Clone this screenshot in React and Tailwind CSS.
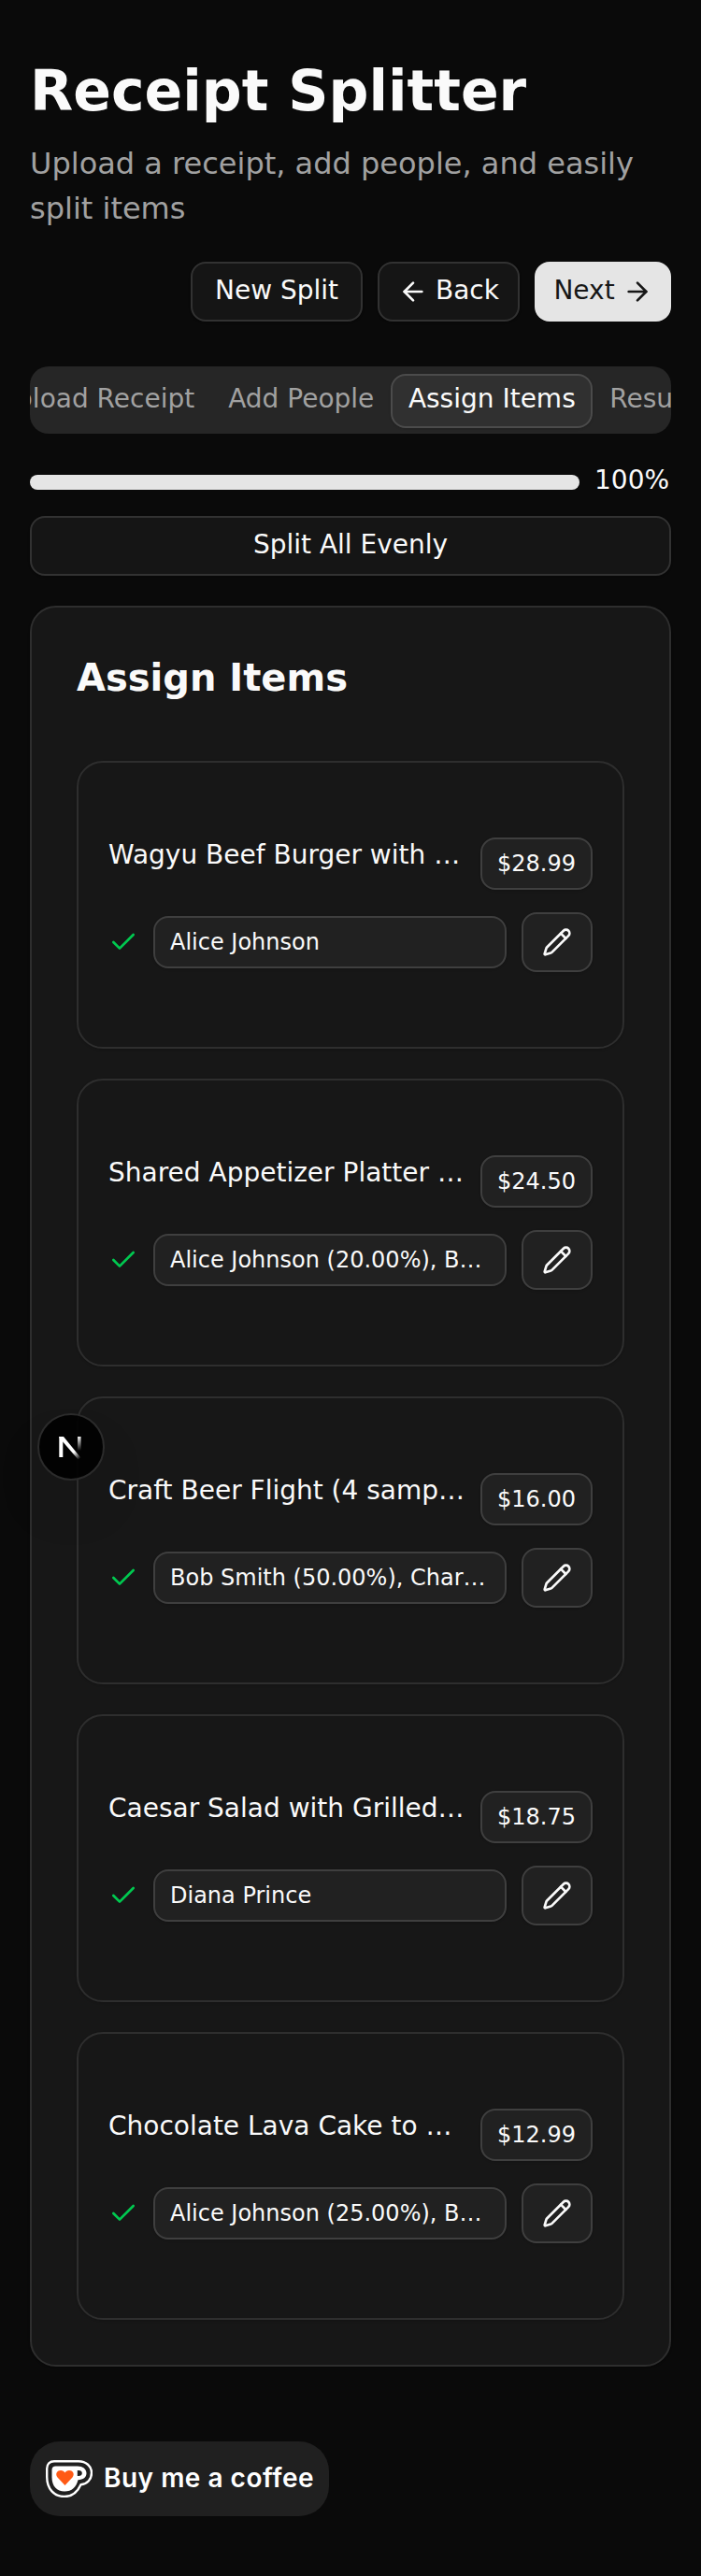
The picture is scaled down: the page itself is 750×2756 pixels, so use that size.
import { ArrowLeft, ArrowRight, Check, Pencil } from "lucide-react";

const items = [
  { name: "Wagyu Beef Burger with …", price: "$28.99", people: "Alice Johnson" },
  { name: "Shared Appetizer Platter …", price: "$24.50", people: "Alice Johnson (20.00%), B…" },
  { name: "Craft Beer Flight (4 samp…", price: "$16.00", people: "Bob Smith (50.00%), Char…" },
  { name: "Caesar Salad with Grilled…", price: "$18.75", people: "Diana Prince" },
  { name: "Chocolate Lava Cake to …", price: "$12.99", people: "Alice Johnson (25.00%), B…" },
];

const tabs = ["Upload Receipt", "Add People", "Assign Items", "Results"];

function OutlineButton({ children, className }) {
  return (
    <button className={`flex h-16 items-center justify-center rounded-[16px] border-2 border-[#323232] bg-[#151515] text-[28px] leading-10 shadow-sm ${className}`}>
      {children}
    </button>
  );
}

function ItemCard({ item }) {
  return (
    <div className="flex h-[308px] flex-col rounded-[28px] border-2 border-[#2e2e2e] bg-[#171717] px-8 pt-20 shadow-sm">
      <div className="flex items-start gap-4">
        <p className="min-w-0 flex-1 text-[28px] leading-[38px] whitespace-nowrap">{item.name}</p>
        <span className="flex h-14 shrink-0 items-center rounded-[16px] border-2 border-[#3f3f3f] bg-[#212121] px-4 text-2xl shadow-sm">
          {item.price}
        </span>
      </div>
      <div className="mt-6 flex items-center gap-4">
        <Check className="size-8 shrink-0 text-[#00c950]" />
        <div className="h-14 min-w-0 flex-1 rounded-[16px] border-2 border-[#3f3f3f] bg-[#212121] px-4 shadow-sm">
          <p className="text-2xl leading-[52px] whitespace-nowrap">{item.people}</p>
        </div>
        <button className="flex h-16 w-[76px] shrink-0 items-center justify-center rounded-[16px] border-2 border-[#3f3f3f] bg-[#212121] shadow-sm">
          <Pencil className="size-8" />
        </button>
      </div>
    </div>
  );
}

function DevBadge() {
  return (
    <div className="absolute top-[1512px] left-10 flex size-[72px] items-center justify-center rounded-full border-2 border-[#2b2b2b] bg-black/90 shadow-[0_32px_64px_-16px_rgba(0,0,0,0.24)]">
      <svg width="40" height="40" viewBox="0 0 40 40" fill="none">
        <defs>
          <linearGradient id="diag" x1="17" y1="18" x2="29" y2="33" gradientUnits="userSpaceOnUse">
            <stop offset="0.5" stopColor="#fff" />
            <stop offset="1" stopColor="#fff" stopOpacity="0" />
          </linearGradient>
          <linearGradient id="stem" x1="0" y1="8" x2="0" y2="24" gradientUnits="userSpaceOnUse">
            <stop stopColor="#fff" />
            <stop offset="1" stopColor="#fff" stopOpacity="0" />
          </linearGradient>
        </defs>
        <path d="M9.3 31V9" stroke="#fff" strokeWidth="4" />
        <path d="M7.3 9H12L32.5 34.2L30 36.2L7.3 10Z" fill="url(#diag)" />
        <path d="M28.8 9V25" stroke="url(#stem)" strokeWidth="3.6" />
      </svg>
    </div>
  );
}

function CoffeeCup() {
  return (
    <svg className="shrink-0" width="50" height="40" viewBox="0 0 50 40" fill="none">
      <path d="M9 1.2H35C43 1.2 49 6.5 49 13.5C49 20.5 44.5 25.5 37.5 26.3C34 34 28.5 39 20 39C9 39 1.2 31 1.2 18V9C1.2 4.2 4.2 1.2 9 1.2Z" fill="#202020" stroke="#fff" strokeWidth="2.4" />
      <path d="M10.5 6.5H34C39.500 6.5 43.5 9.5 43.5 14C43.5 18.5 40 21 34.5 21.2C32.5 29 28 33.5 20 33.5C12 33.5 6.5 28 6.5 18.5V10.5C6.5 8 8 6.5 10.5 6.5Z" fill="#fff" />
      <path d="M33.8 11H35C37.5 11 38.8 12 38.8 14C38.8 16 37.5 17 35 17H33.8Z" fill="#202020" />
      <path d="M20.5 27L12.5 18.5C9.5 14.5 12.5 11 16 11C18 11 19.6 12 20.5 13.5C21.4 12 23 11 25 11C28.5 11 31.5 14.5 28.5 18.5Z" fill="#ff5a16" />
    </svg>
  );
}

export default function App() {
  return (
    <div className="relative flex h-[2756px] w-[750px] flex-col overflow-hidden bg-[#0a0a0a] px-8 pt-[61px] font-['DejaVu_Sans',sans-serif] text-[#fafafa]">
      <h1 className="text-[60px] leading-[72px] font-bold">Receipt Splitter</h1>
      <p className="mt-[18px] text-[32px] leading-[48px] text-[#a1a1a1]">Upload a receipt, add people, and easily split items</p>

      <div className="mt-[33px] flex shrink-0 justify-end gap-4">
        <OutlineButton className="w-[184px]">
          <span className="pb-0.5">New Split</span>
        </OutlineButton>
        <OutlineButton className="w-[152px] gap-2">
          <ArrowLeft className="size-8" />
          <span className="pb-0.5">Back</span>
        </OutlineButton>
        <button className="flex h-16 w-[146px] items-center justify-center gap-2 rounded-[16px] bg-[#e5e5e5] text-[28px] leading-10 text-[#171717]">
          <span className="pb-0.5">Next</span>
          <ArrowRight className="size-8" />
        </button>
      </div>

      <div className="mt-12 flex h-[72px] shrink-0 items-center justify-center overflow-hidden rounded-[20px] bg-[#262626] pt-0.5">
        {tabs.map((tab) => (
          <button
            key={tab}
            className={`flex h-[58px] shrink-0 items-center justify-center rounded-[16px] border-2 pb-1 text-[28px] leading-10 whitespace-nowrap ${
              tab === "Assign Items" ? "w-[216px] border-[#4b4b4b] bg-[#303030] text-[#fafafa] shadow-sm" : "border-transparent px-4 text-[#a1a1a1]"
            }`}
          >
            {tab}
          </button>
        ))}
      </div>

      <div className="mt-8 flex h-10 shrink-0 items-center gap-4">
        <div className="h-4 w-[588px] shrink-0 rounded-full bg-[#e5e5e5]" />
        <span className="pb-1 text-[28px] leading-10">100%</span>
      </div>

      <OutlineButton className="mt-4 w-full shrink-0">
        <span className="pb-0.5">Split All Evenly</span>
      </OutlineButton>

      <section className="mt-8 h-[1884px] shrink-0 rounded-[28px] border-2 border-[#2e2e2e] bg-[#171717] px-12 pt-[47px] shadow-sm">
        <h2 className="text-[40px] leading-[56px] font-bold">Assign Items</h2>
        <div className="mt-[61px] flex flex-col gap-8">
          {items.map((item) => (
            <ItemCard key={item.name} item={item} />
          ))}
        </div>
      </section>

      <a className="mt-20 flex h-20 w-80 shrink-0 items-center gap-3 rounded-[32px] bg-[#202020] pl-[17px] font-['Inter',sans-serif] text-[28px] font-semibold tracking-[0.5px] whitespace-nowrap text-white">
        <CoffeeCup />
        <span className="pb-0.5">Buy me a coffee</span>
      </a>

      <DevBadge />
    </div>
  );
}
